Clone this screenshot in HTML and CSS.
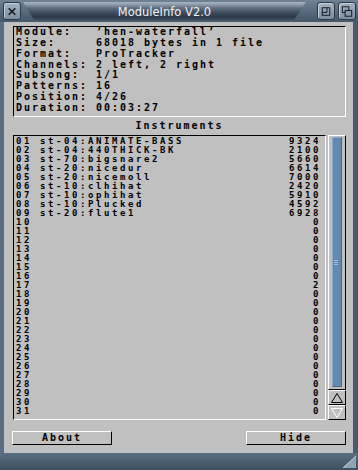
FILE: index.html
```html
<!DOCTYPE html>
<html lang="en">
<head>
  <meta charset="UTF-8">
  <title>ModuleInfo V2.0</title>
  <link rel="stylesheet" href="styles.css">
</head>
<body>

<div class="window">
  <div class="titlebar">
    <div class="gadget close">
      <svg width="17" height="17" viewBox="0 0 17 17">
        <path d="M5 5 L12 12 M12 5 L5 12" stroke="#10161e" stroke-width="1.6" fill="none"/>
      </svg>
    </div>
    <div class="dragbar"><span class="title">ModuleInfo V2.0</span></div>
    <div class="gadget">
      <svg width="17" height="17" viewBox="0 0 17 17">
        <rect x="4.5" y="4.5" width="8" height="8" stroke="#10161e" fill="none"/>
        <path d="M9.5 4.5 V9.5 H4.5" stroke="#10161e" fill="none"/>
      </svg>
    </div>
    <div class="gadget">
      <svg width="17" height="17" viewBox="0 0 17 17">
        <rect x="3.5" y="3.5" width="7" height="6" stroke="#10161e" fill="none"/>
        <rect x="6.5" y="7.5" width="7" height="6" stroke="#10161e" fill="#8a9aac"/>
      </svg>
    </div>
  </div>

  <div class="content">
    <div class="info">
      <div class="line">Module:   ’hen-waterfall’</div>
      <div class="line">Size:     68018 bytes in 1 file</div>
      <div class="line">Format:   ProTracker</div>
      <div class="line">Channels: 2 left, 2 right</div>
      <div class="line">Subsong:  1/1</div>
      <div class="line">Patterns: 16</div>
      <div class="line">Position: 4/26</div>
      <div class="line">Duration: 00:03:27</div>
    </div>

    <div class="list-title">Instruments</div>

    <div class="list-area">
      <div class="list" id="list"></div>
      <div class="scroller">
        <div class="track">
          <div class="knob"><span class="grip"></span></div>
        </div>
        <div class="arrow">
          <svg width="16" height="14" viewBox="0 0 16 14">
            <path d="M8 2.5 L13.5 11.5 H2.5 Z" stroke="#000" fill="none"/>
          </svg>
        </div>
        <div class="arrow">
          <svg width="16" height="14" viewBox="0 0 16 14">
            <path d="M2.5 2.5 H13.5 L8 11.5 Z" stroke="#fff" fill="none"/>
          </svg>
        </div>
      </div>
    </div>

    <div class="buttons">
      <div class="btn">About</div>
      <div class="btn">Hide</div>
    </div>
  </div>

  <div class="bottom">
    <svg class="sizer" width="16" height="14" viewBox="0 0 16 14">
      <path d="M15 1 L15 13 L2 13 Z" fill="#8fa2b6"/>
      <path d="M15 1 L2 13" stroke="#c8d4e0" fill="none"/>
    </svg>
  </div>
</div>

<script>
  const instruments = [
    ["st-04:ANIMATE-BASS", 9324],
    ["st-04:440THICK-BK", 2100],
    ["st-70:bigsnare2", 5660],
    ["st-20:nicedur", 6614],
    ["st-20:nicemoll", 7000],
    ["st-10:clhihat", 2420],
    ["st-10:ophihat", 5910],
    ["st-10:Plucked", 4592],
    ["st-20:flute1", 6928]
  ];

  let html = "";
  for (let i = 1; i <= 31; i++) {
    const item = instruments[i - 1] || ["", i === 17 ? 2 : 0];
    const num = String(i).padStart(2, "0");
    html += `<div class="row"><span>${num} ${item[0]}</span><span>${item[1]}</span></div>`;
  }
  document.getElementById("list").innerHTML = html;
</script>

</body>
</html>
```

FILE: styles.css
```css
* {
  box-sizing: border-box;
}

html, body {
  margin: 0;
  padding: 0;
  width: 358px;
  height: 470px;
  overflow: hidden;
  background: #4c5e72;
}

.window {
  display: flex;
  flex-direction: column;
  width: 358px;
  height: 470px;
  background: linear-gradient(90deg, #5a6d82, #4a5b6e);
}

/* title bar */
.titlebar {
  display: flex;
  align-items: flex-start;
  height: 22px;
  padding: 2px 2px 0 3px;
  background: linear-gradient(#6f8195, #55677b 60%, #46576a);
}

.gadget {
  width: 18px;
  height: 18px;
  border: 1px solid #2c3846;
  border-radius: 3px;
  background: linear-gradient(#a3b1c0, #7d8ea1);
  box-shadow: inset 1px 1px 0 #c4cfda;
  display: flex;
  align-items: center;
  justify-content: center;
  margin-left: 3px;
}

.gadget.close {
  margin-left: 0;
}

.dragbar {
  flex: 1;
  height: 18px;
  margin: 0 8px 0 2px;
  clip-path: polygon(0 0, 100% 0, calc(100% - 12px) 100%, 11px 100%);
  background: linear-gradient(#a8b4c2 0, #8997a7 3px, #5f6e80 6px, #3c4a5b 11px, #2d3a49 15px, #3e4d5e 18px);
  display: flex;
  justify-content: center;
  align-items: center;
}

.title {
  font-family: "DejaVu Sans", sans-serif;
  font-size: 11.5px;
  color: #eef2f6;
  padding-top: 1px;
}

/* window content */
.content {
  height: 431px;
  margin: 0 5px 0 4px;
  background: #c0c0c0;
  display: flex;
  flex-direction: column;
  font-family: "DejaVu Sans Mono", monospace;
  font-weight: bold;
  font-size: 10px;
  letter-spacing: 1.98px;
  color: #000;
}

.info {
  margin: 4px 7px 0 9px;
  height: 91px;
  border-top: 1px solid #000;
  border-left: 1px solid #000;
  border-right: 1px solid #fff;
  border-bottom: 1px solid #fff;
  padding: 0 0 0 2px;
}

.line {
  white-space: pre;
  line-height: 10.86px;
}

.list-title {
  height: 18px;
  line-height: 18px;
  text-align: center;
  margin: 0 7px 0 9px;
}

.list-area {
  display: flex;
  height: 285px;
  margin: 0 7px 0 9px;
  gap: 2px;
}

.list {
  flex: 1;
  border-top: 1px solid #000;
  border-left: 1px solid #000;
  border-right: 1px solid #fff;
  border-bottom: 1px solid #fff;
  padding: 0 4px 0 2px;
  font-size: 9px;
  letter-spacing: 2.58px;
}

.row {
  display: flex;
  justify-content: space-between;
  line-height: 9px;
  height: 9px;
  white-space: pre;
  padding-top: 1px;
}

.scroller {
  width: 18px;
  display: flex;
  flex-direction: column;
}

.track {
  flex: 1;
  border-top: 1px solid #fff;
  border-left: 1px solid #fff;
  border-right: 1px solid #000;
  border-bottom: 1px solid #000;
  padding: 1px 2px 2px 3px;
}

.knob {
  width: 10px;
  height: 100%;
  background: #6488ae;
  border-top: 1px solid #8aaacb;
  border-left: 1px solid #8aaacb;
  border-right: 1px solid #46668a;
  border-bottom: 1px solid #46668a;
  display: flex;
  align-items: center;
}

.grip {
  display: block;
  width: 4px;
  height: 5px;
  margin-left: 1px;
  background: repeating-linear-gradient(#a9c0d8 0 1px, transparent 1px 2px);
}

.arrow {
  height: 15px;
  border-top: 1px solid #fff;
  border-left: 1px solid #fff;
  border-right: 1px solid #000;
  border-bottom: 1px solid #000;
  display: flex;
  align-items: center;
  justify-content: center;
}

.buttons {
  display: flex;
  justify-content: space-between;
  margin: 11px 7px 0 8px;
}

.btn {
  width: 100px;
  height: 14px;
  border-top: 1px solid #fff;
  border-left: 1px solid #fff;
  border-right: 1px solid #000;
  border-bottom: 1px solid #000;
  text-align: center;
  line-height: 12px;
}

/* bottom frame */
.bottom {
  flex: 1;
  display: flex;
  justify-content: flex-end;
  align-items: flex-end;
  background: linear-gradient(#5a6d82, #3f4f61);
}

.sizer {
  display: block;
  margin: 0 1px 1px 0;
}
```
